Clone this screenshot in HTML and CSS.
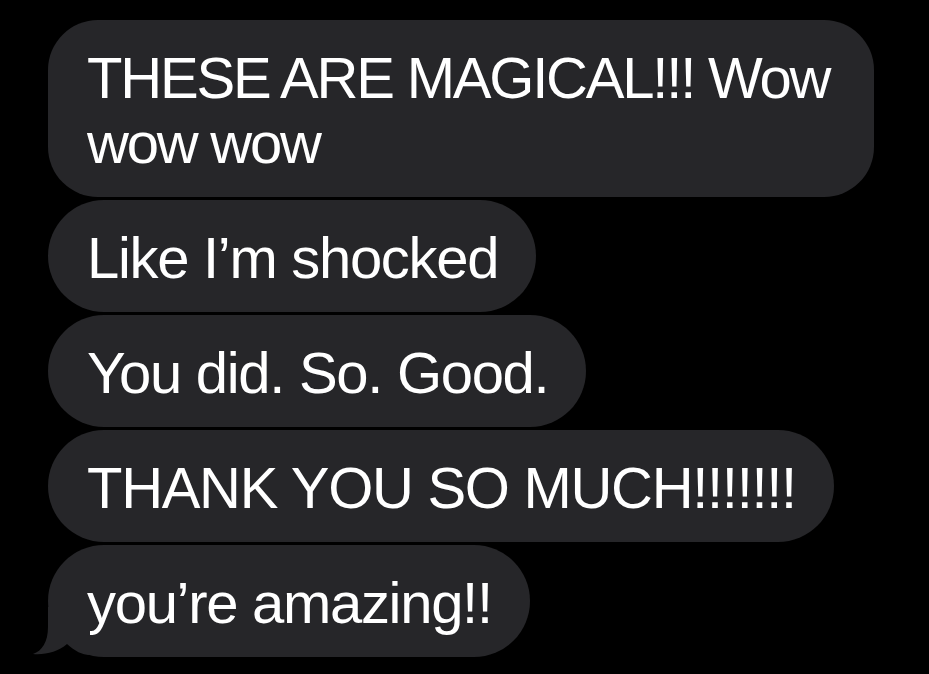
FILE: index.html
```html
<!DOCTYPE html>
<html>
<head>
<meta charset="utf-8">
<link rel="stylesheet" href="styles.css">
</head>
<body>
<div class="thread">
  <div class="bubble wide">THESE ARE MAGICAL!!! Wow<br>wow wow</div>
  <div class="bubble">Like I’m shocked</div>
  <div class="bubble">You did. So. Good.</div>
  <div class="bubble">THANK YOU SO MUCH!!!!!!!</div>
  <div class="bubble last">you’re amazing!!
    <svg class="tail" width="60" height="50" viewBox="0 0 60 50"><path d="M18 0 L18 20 C18 35 12 44 3 47 C15 48 28 45 37 37 C45 44 52 48 60 48 L60 0 Z" fill="#262629"/></svg>
  </div>
</div>
</body>
</html>
```

FILE: styles.css
```css
html, body {
  margin: 0;
  background: #000;
}
body {
  width: 929px;
  height: 674px;
  overflow: hidden;
}
.thread {
  display: flex;
  flex-direction: column;
  align-items: flex-start;
  gap: 3px;
  padding: 20px 0 0 48px;
}
.bubble {
  position: relative;
  background: #262629;
  color: #fff;
  font-family: "Liberation Sans", Arial, sans-serif;
  font-size: 58px;
  line-height: 65px;
  letter-spacing: -1.3px;
  padding: 25px 38px 22px 39px;
  border-radius: 56px;
  white-space: nowrap;
}
.bubble.wide {
  width: 749px;
  letter-spacing: -2.2px;
  border-radius: 50px;
}
.tail {
  position: absolute;
  left: -18px;
  bottom: 0;
  display: block;
}
```
